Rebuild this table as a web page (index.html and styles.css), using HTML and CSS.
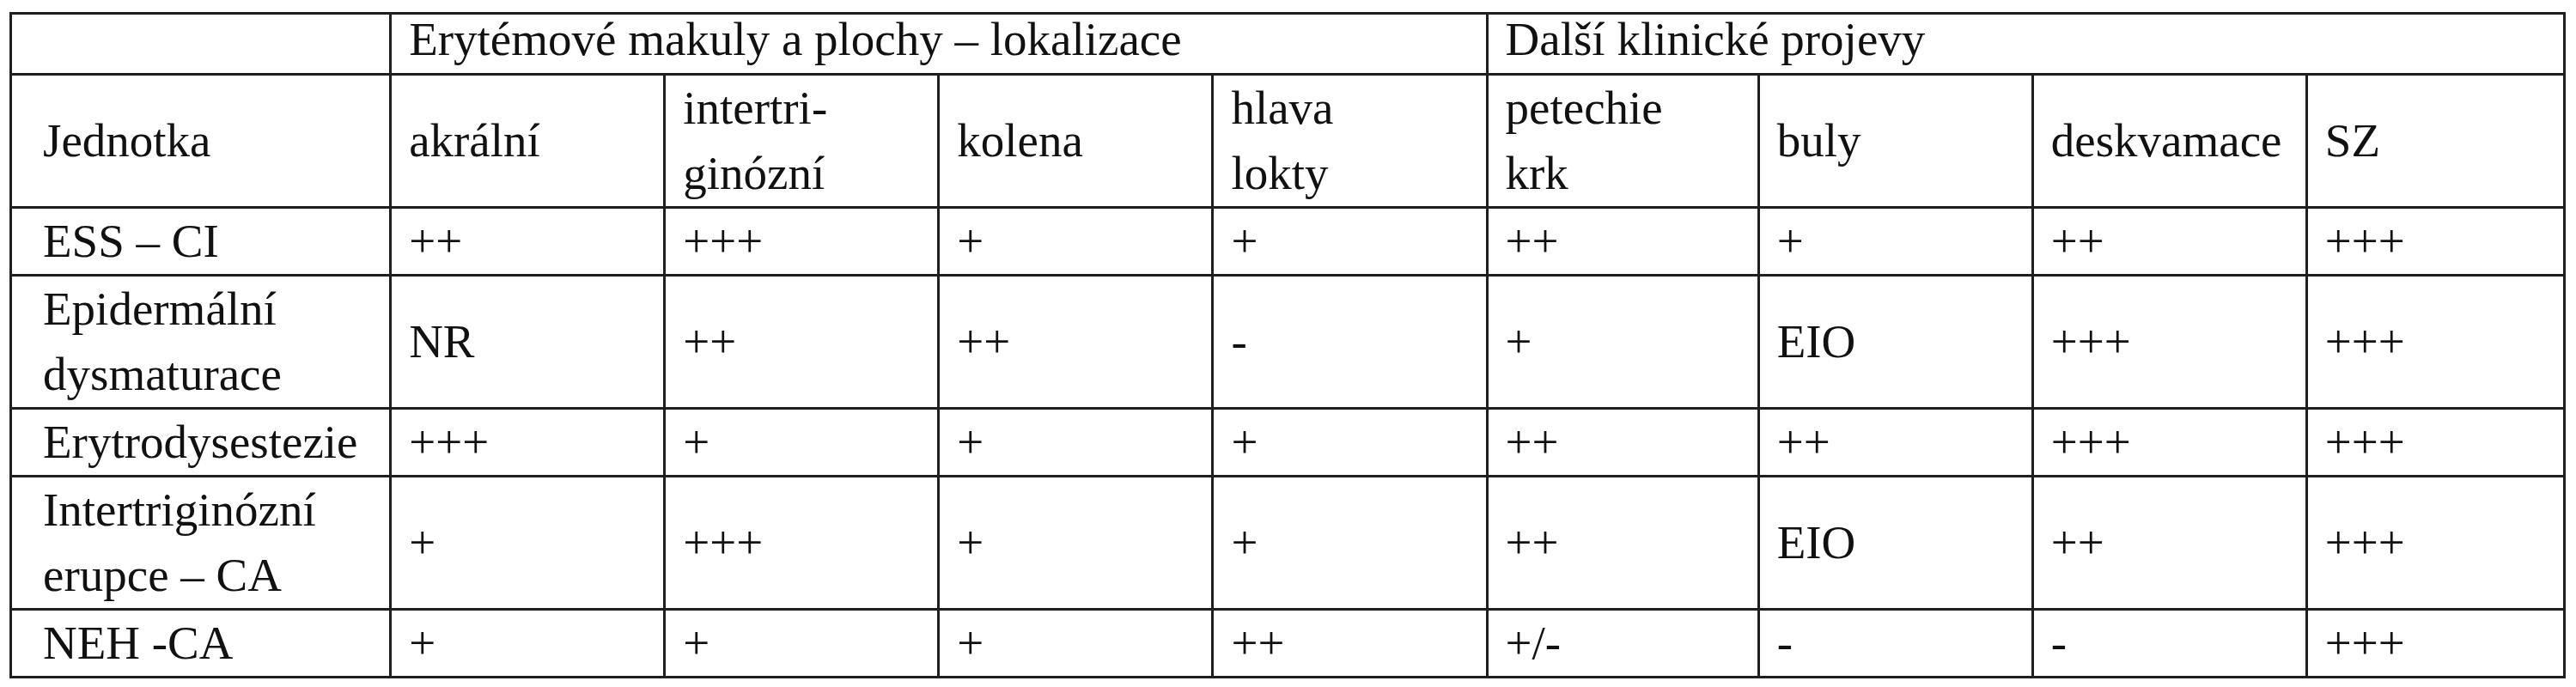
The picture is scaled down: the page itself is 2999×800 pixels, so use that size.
FILE: index.html
```html
<!DOCTYPE html>
<html lang="cs">
<head>
<meta charset="utf-8">
<title>Tabulka</title>
<link rel="stylesheet" href="styles.css">
</head>
<body>
<table class="grid">
  <colgroup>
    <col class="c-first">
    <col class="c-mid"><col class="c-mid"><col class="c-mid"><col class="c-mid">
    <col class="c-mid5"><col class="c-mid"><col class="c-mid"><col class="c-last">
  </colgroup>
  <thead>
    <tr class="group">
      <th class="first"></th>
      <th colspan="4">Erytémové makuly a plochy – lokalizace</th>
      <th colspan="4">Další klinické projevy</th>
    </tr>
    <tr>
      <th class="first">Jednotka</th>
      <th>akrální</th>
      <th>intertri-<br>ginózní</th>
      <th>kolena</th>
      <th>hlava<br>lokty</th>
      <th>petechie<br>krk</th>
      <th>buly</th>
      <th>deskvamace</th>
      <th>SZ</th>
    </tr>
  </thead>
  <tbody>
    <tr>
      <td class="first">ESS – CI</td>
      <td>++</td><td>+++</td><td>+</td><td>+</td><td>++</td><td>+</td><td>++</td><td>+++</td>
    </tr>
    <tr>
      <td class="first">Epidermální<br>dysmaturace</td>
      <td>NR</td><td>++</td><td>++</td><td>-</td><td>+</td><td>EIO</td><td>+++</td><td>+++</td>
    </tr>
    <tr>
      <td class="first">Erytrodysestezie</td>
      <td>+++</td><td>+</td><td>+</td><td>+</td><td>++</td><td>++</td><td>+++</td><td>+++</td>
    </tr>
    <tr>
      <td class="first">Intertriginózní<br>erupce – CA</td>
      <td>+</td><td>+++</td><td>+</td><td>+</td><td>++</td><td>EIO</td><td>++</td><td>+++</td>
    </tr>
    <tr>
      <td class="first">NEH -CA</td>
      <td>+</td><td>+</td><td>+</td><td>++</td><td>+/-</td><td>-</td><td>-</td><td>+++</td>
    </tr>
  </tbody>
</table>
</body>
</html>
```

FILE: styles.css
```css
html, body {
  margin: 0;
  padding: 0;
  background: #ffffff;
}

body {
  padding: 14px 0 0 11px;
}

.grid {
  border-collapse: collapse;
  table-layout: fixed;
  width: 2976px;
  font-family: "Liberation Serif", "Times New Roman", serif;
  font-size: 55px;
  color: #111111;
}

.c-first { width: 442px; }
.c-mid { width: 319px; }
.c-mid5 { width: 316px; }
.c-last { width: 300px; }

.grid th,
.grid td {
  border: 3px solid #1f1f1f;
  padding: 0 10px 0 20px;
  line-height: 76px;
  text-align: left;
  vertical-align: middle;
  font-weight: normal;
  white-space: nowrap;
}

.grid .group th {
  line-height: 58px;
  padding-bottom: 10px;
}

.grid .first {
  padding-left: 36px;
}
```
